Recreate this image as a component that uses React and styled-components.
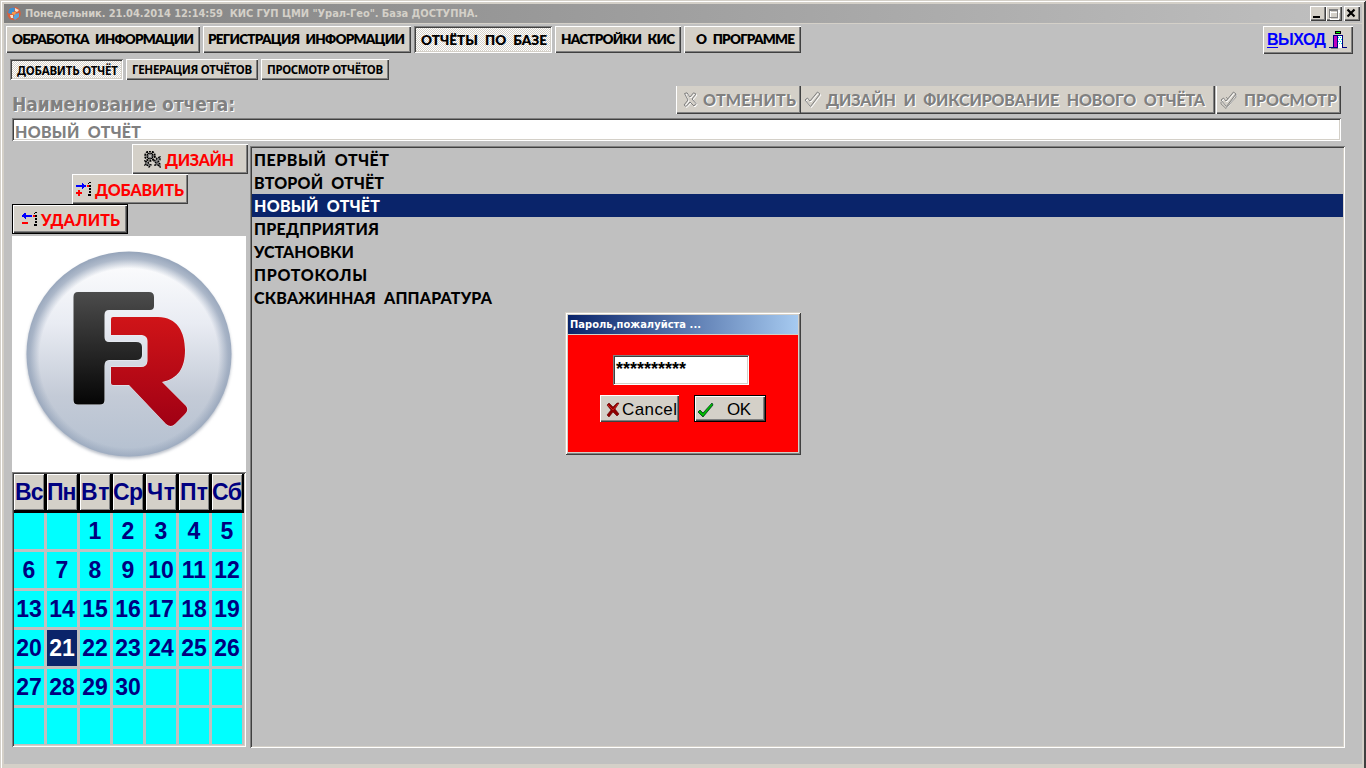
import React, { useLayoutEffect, useRef } from "react";
import styled, { createGlobalStyle, css } from "styled-components";

const COMIC = `Lato, "Noto Sans", sans-serif`;
const TAHOMA = `"DejaVu Sans Condensed", "DejaVu Sans", "Noto Sans", sans-serif`;
const ARIAL = `"Liberation Sans", Arial, sans-serif`;

const Global = createGlobalStyle`
  * { box-sizing: border-box; }
  html, body { margin: 0; padding: 0; overflow: hidden; background: #c0c0c0; }
  button { margin: 0; border: 0; padding: 0; border-radius: 0; color: inherit; }
`;

const raised = css`
  box-shadow: inset 1px 1px #fff, inset -1px -1px #404040, inset -2px -2px #808080;
`;
const sunken = css`
  box-shadow: inset 1px 1px #808080, inset -1px -1px #fff, inset 2px 2px #404040,
    inset -2px -2px #d4d0c8;
`;

const Window = styled.div`
  position: relative;
  width: 1366px;
  height: 768px;
  padding: 4px 4px 4px 4px;
  background: #c0c0c0;
  overflow: hidden;
  box-shadow: inset 1px 0 #d4d0c8, inset 0 1px #d4d0c8, inset -1px 0 #404040,
    inset 2px 2px #fff, inset -2px 0 #404040, inset 0 -4px #d4d0c8, inset 4px 4px #d4d0c8,
    inset -4px 0 #d4d0c8;
`;
const TitleBar = styled.header`
  display: flex;
  align-items: center;
  height: 20px;
  padding: 0 2px 1px 3px;
  gap: 4px;
  border-bottom: 1px solid #d4d0c8;
  background: linear-gradient(90deg, #808080, #c0c0c0);
  color: #d4d0c8;
  font: bold 11px ${TAHOMA};
`;
const Caption = styled.div`
  flex: 1;
  padding-top: 1px;
`;
const WinButtons = styled.div`
  display: flex;
  height: 15px;
`;
const WinButton = styled.button`
  width: 16px;
  height: 15px;
  margin-left: ${(p) => p.$gap || 0}px;
  background: #d4d0c8;
  ${raised}
  svg { display: block; }
`;
const TextSpan = styled.span`
  display: inline-block;
  white-space: pre;
`;

/* Spreads the letters so that a label fills the given width. */
function Fit({ w, children }) {
  const ref = useRef(null);
  useLayoutEffect(() => {
    const el = ref.current;
    el.style.letterSpacing = "0px";
    const natural = el.getBoundingClientRect().width;
    const n = el.textContent.length - 1;
    el.style.letterSpacing = `${(w - natural) / n}px`;
  }, [w, children]);
  return <TextSpan ref={ref}>{children}</TextSpan>;
}

const MainTabs = styled.nav`
  display: flex;
  gap: 3px;
  padding: 2px 9px 0 2px;
  height: 30px;
`;
const Tab = styled.button`
  width: ${(p) => p.$w}px;
  height: 27px;
  padding: ${(p) => (p.$down ? 2 : 0)}px 0 0 ${(p) => p.$pad}px;
  text-align: left;
  white-space: nowrap;
  background: #d4d0c8;
  color: #000;
  font: 800 13.5px/25px ${COMIC};
  word-spacing: 4px;
  ${raised}
  ${(p) =>
    p.$down &&
    css`
      background: repeating-conic-gradient(#fff 0 25%, #d4d0c8 0 50%) 0 0 / 2px 2px;
      ${sunken}
    `}
`;
const SubTabs = styled.nav`
  display: flex;
  gap: 3px;
  padding: 5px 0 0 6px;
`;
const SubTab = styled(Tab)`
  height: 21px;
  font: bold 11.5px/20px "Noto Sans", "Open Sans", sans-serif;
  word-spacing: 0;
`;
const ExitButton = styled.button`
  display: flex;
  align-items: center;
  gap: 4px;
  width: 90px;
  height: 28px;
  margin-left: auto;
  padding-left: 4px;
  background: #d4d0c8;
  color: #0000ff;
  font: bold 16px ${ARIAL};
  ${raised}
  u { text-underline-offset: 2px; text-decoration-thickness: 1px; }
`;
const ReportBar = styled.div`
  display: flex;
  height: 28px;
  margin: 6px 21px 0 8px;
`;
const ReportLabel = styled.label`
  flex: 1;
  padding: 6px 0 0 0;
  color: #808080;
  text-shadow: 1px 1px #fff;
  font: bold 19px/24px ${TAHOMA};
`;
const GhostButton = styled.button`
  display: flex;
  align-items: center;
  gap: ${(p) => p.$gap}px;
  width: ${(p) => p.$w}px;
  height: 28px;
  margin-left: ${(p) => p.$ml || 0}px;
  padding: 0 0 1px ${(p) => p.$pad}px;
  background: #d4d0c8;
  color: #808080;
  text-shadow: 1px 1px #fff;
  font: 900 16px ${COMIC};
  word-spacing: 4px;
  box-shadow: inset ${(p) => (p.$flat ? 0 : 1)}px 0 #fff, inset -1px -1px #404040,
    inset -2px -2px #808080;
  svg { flex: none; }
`;
const NameField = styled.div`
  height: 23px;
  margin: 4px 21px 0 8px;
  padding-left: 3px;
  background: #fff;
  color: #808080;
  font: 900 16px/27px ${COMIC};
  word-spacing: 4px;
  ${sunken}
`;
const Body = styled.main`
  display: flex;
  padding: 3px 0 0 8px;
`;
const Side = styled.aside`
  width: 238px;
`;
const ActionButton = styled.button`
  display: flex;
  align-items: center;
  width: 116px;
  height: 30px;
  margin-left: ${(p) => p.$ml}px;
  padding: 0 0 0 ${(p) => p.$pad}px;
  gap: ${(p) => p.$gap}px;
  background: #d4d0c8;
  color: #ff0000;
  font: 900 16px ${COMIC};
  ${raised}
  ${(p) =>
    p.$default &&
    css`
      box-shadow: inset 0 0 0 1px #000, inset 2px 2px #fff, inset -2px -2px #404040,
        inset -3px -3px #808080;
    `}
  svg { flex: none; }
`;
const Picture = styled.div`
  width: 234px;
  height: 236px;
  margin-top: 2px;
  background: #fff;
  svg { display: block; }
`;
const Calendar = styled.div`
  width: 234px;
  height: 275px;
  padding: 2px;
  background: #c0c0c0;
  color: #000080;
  font: bold 23px ${ARIAL};
  ${sunken}
`;
const WeekHead = styled.div`
  display: grid;
  grid-template-columns: repeat(7, 30px);
  gap: 3px;
  height: 39px;
  background: #000;
`;
const WeekDay = styled.div`
  height: 36px;
  padding-left: ${(p) => p.$pad}px;
  background: #d4d0c8;
  line-height: 36px;
  white-space: nowrap;
  box-shadow: inset 1px 1px #fff, inset -1px -1px #808080;
`;
const Days = styled.div`
  display: grid;
  grid-template-columns: repeat(7, 30px);
  grid-auto-rows: 36px;
  gap: 3px;
`;
const Day = styled.div`
  display: flex;
  align-items: center;
  justify-content: center;
  background: ${(p) => (p.$on ? "#0a246a" : "#00ffff")};
  color: ${(p) => (p.$on ? "#fff" : "#000080")};
`;
const List = styled.div`
  width: 1095px;
  height: 602px;
  margin-top: 2px;
  padding: 2px;
  background: #c0c0c0;
  font: 900 16px/24px ${COMIC};
  word-spacing: 4px;
  ${sunken}
`;
const ListItem = styled.div`
  height: 23px;
  padding-left: 2px;
  background: ${(p) => (p.$on ? "#0a246a" : "transparent")};
  color: ${(p) => (p.$on ? "#fff" : "#000")};
`;

const Dialog = styled.div`
  position: absolute;
  left: 565px;
  top: 312px;
  width: 236px;
  height: 143px;
  padding: 3px;
  background: #d4d0c8;
  box-shadow: inset 1px 1px #d4d0c8, inset -1px -1px #404040, inset 2px 2px #fff,
    inset -2px -2px #808080;
`;
const DialogTitle = styled.div`
  height: 19px;
  padding-left: 2px;
  background: linear-gradient(90deg, #0a246a, #a6caf0);
  color: #fff;
  font: bold 11px/20px ${TAHOMA};
`;
const DialogBody = styled.div`
  height: 117px;
  margin-top: 1px;
  padding: 20px 0 0 32px;
  background: #ff0000;
`;
const Password = styled.div`
  width: 136px;
  height: 30px;
  margin-left: 13px;
  padding-left: 3px;
  background: #fff;
  color: #000;
  font: bold 18px/28px ${ARIAL};
  ${sunken}
`;
const DialogButtons = styled.div`
  display: flex;
  gap: 15px;
  margin-top: 10px;
`;
const DialogButton = styled.button`
  display: flex;
  align-items: center;
  width: ${(p) => p.$w}px;
  height: 27px;
  padding: 2px 0 0 ${(p) => p.$pad}px;
  gap: ${(p) => p.$gap}px;
  background: #d4d0c8;
  color: #000;
  font: 17px ${ARIAL};
  ${raised}
  ${(p) =>
    p.$default &&
    css`
      box-shadow: inset 0 0 0 1px #000, inset 2px 2px #fff, inset -2px -2px #404040,
        inset -3px -3px #808080;
    `}
  svg { flex: none; }
`;

const GlobeIcon = () => (
  <svg width="14" height="15" viewBox="0 0 14 15">
    <circle cx="7" cy="7.5" r="6.8" fill="#d8603c" />
    <path d="M2 3 Q6 0 8 2 L7 6 4 8 1 7Z" fill="#3d8fd0" />
    <path d="M8 8 L12 7 12 11 8 14 6 12Z" fill="#5aa5dc" />
    <path d="M8 2 L12 4 10 6 8 5Z M3 9 L6 9 6 12 4 12Z" fill="#f4e4d0" />
    <path d="M5 6 L9 6 8 9 5 8Z" fill="#f59d50" />
  </svg>
);
const ExitIcon = () => (
  <svg width="18" height="19" viewBox="0 0 18 19" shapeRendering="crispEdges">
    <path d="M6 0h6v3H6z" fill="#000" />
    <path d="M7 1h4v1H7z" fill="#00ff00" />
    <path d="M4 4h10v1H4z" fill="#000080" />
    <path d="M5 5h3v11H5z" fill="#c000c0" />
    <path d="M4 4h1v12H4zM8 4h1v14H8zM13 4h1v13h-1z" fill="#000080" />
    <path d="M9 5h4v12H9z" fill="#fff" />
    <path d="M9 6h1v1H9zM11 6h1v1h-1zM10 8h1v1h-1zM12 8h1v1h-1zM9 10h1v1H9zM11 10h1v1h-1zM10 12h1v1h-1zM12 12h1v1h-1z" fill="#00d8e8" />
    <path d="M0 16h8v1H0zM13 16h5v1h-5z" fill="#000080" />
    <path d="M2 17h7v1H2z" fill="#808080" />
  </svg>
);
const CHECK = "M1 9 L3.5 7 L6 10 L13.5 1 L16 3 L6.5 15.5 Z";
const GhostCross = () => (
  <svg width="15" height="16" viewBox="0 0 15 16" fill="none" strokeWidth="1">
    {["#fff", "#808080"].map((c, i) => (
      <path
        key={c}
        transform={i ? undefined : "translate(1 1)"}
        stroke={c}
        d="M1.5 1.5 L4 .8 L7 5 L10.5 .8 L13 2 L9 7 L13 11.5 L11 14 L7 10 L3 14.5 L1 13 L5 8 Z"
      />
    ))}
  </svg>
);
const GhostCheck = ({ twice }) => (
  <svg width="18" height="18" viewBox="0 0 18 18" fill="none" strokeWidth="1">
    <path transform="translate(1 1)" stroke="#fff" d={CHECK} />
    <path stroke="#808080" d={CHECK} />
    {twice && <path stroke="#808080" strokeWidth=".8" d="M1 11 L1 13 L6 17.500 L16 6 V3 M6 6 L8 8" />}
  </svg>
);
const GearsIcon = () => (
  <svg width="17" height="17" viewBox="0 0 17 17">
    <circle cx="6" cy="5" r="4.8" fill="none" stroke="#000" strokeWidth="2" strokeDasharray="2 1" />
    <circle cx="6" cy="5" r="3" fill="#808080" stroke="#000" />
    <circle cx="6" cy="5" r="1" fill="#d4d0c8" />
    <path d="M1 10l3 1 1 2 2 1-2 2-2-2-2 0 1-2zM16 6l-3 1-1 2-2 1 2 2-1 2 3 0 2 2v-3l-2-2 2-2z" fill="#808080" stroke="#000" strokeWidth="1.3" strokeDasharray="2 1" />
  </svg>
);
const Dots = () => (
  <path d="M13 0h2v1h-2zM12 1h1v1h-1zM13 3h2v2h-2zM13 6h2v2h-2zM13 9h2v2h-2zM12 12h3v2h-3z" fill="#000" />
);
const AddIcon = () => (
  <svg width="17" height="15" viewBox="0 0 17 15" shapeRendering="crispEdges">
    <path d="M0 3h6V1h1v1h1v1h2v2H8v1H7v1H6V5H0z" fill="#0000ff" />
    <path d="M11 3h2v2h-2zM2 8h2v2h2v2H4v2H2v-2H0v-2h2z" fill="#ff0000" />
    <Dots />
  </svg>
);
const RemoveIcon = () => (
  <svg width="17" height="15" viewBox="0 0 17 15" shapeRendering="crispEdges">
    <path d="M0 3h1V2h1V1h2v2h6v2H4v2H3V6H2V5H0z" fill="#0000ff" />
    <path d="M11 3h2v2h-2zM0 10h6v2H0z" fill="#ff0000" />
    <Dots />
  </svg>
);
const CancelIcon = () => (
  <svg width="14" height="16" viewBox="0 0 14 16">
    <path d="M1 3 L3 1 L7 5 L11 1 H13 L9 7 L13 12 L11 14 L7 10 L3 15 L1 13 L5 8Z" fill="#900000" stroke="#600000" strokeWidth=".6" />
    <path d="M2 3 L7 8 L12 2" fill="none" stroke="#d02020" strokeWidth="1" />
  </svg>
);
const OkIcon = () => (
  <svg width="17" height="16" viewBox="0 0 17 16">
    <path d="M1 10 L3 8 L6 11 L15 1 L16 3 L6 15Z" fill="#00a000" stroke="#003c20" strokeWidth=".8" />
    <path d="M2 9.5 L6 13 L15 2" fill="none" stroke="#00d000" strokeWidth=".9" />
  </svg>
);

const Logo = () => (
  <svg width="234" height="236" viewBox="12 236 234 236">
    <defs>
      <linearGradient id="disc" x1="0" y1="0" x2="0" y2="1">
        <stop offset="0" stopColor="#ffffff" />
        <stop offset=".35" stopColor="#e9ecf3" />
        <stop offset=".7" stopColor="#c4cbd7" />
        <stop offset="1" stopColor="#b4c0d0" />
      </linearGradient>
      <radialGradient id="rim" cx=".5" cy=".52" r=".52">
        <stop offset=".84" stopColor="#94a3b9" stopOpacity="0" />
        <stop offset=".93" stopColor="#94a3b9" stopOpacity=".75" />
        <stop offset="1" stopColor="#94a3b9" />
      </radialGradient>
      <linearGradient id="ef" x1="0" y1="0" x2="0" y2="1">
        <stop offset="0" stopColor="#4c4c4c" />
        <stop offset="1" stopColor="#050505" />
      </linearGradient>
      <linearGradient id="er" x1="0" y1="0" x2="0" y2="1">
        <stop offset="0" stopColor="#d01418" />
        <stop offset="1" stopColor="#a00014" />
      </linearGradient>
      <filter id="soft" x="-10%" y="-10%" width="120%" height="120%">
        <feGaussianBlur stdDeviation="1.5" />
      </filter>
    </defs>
    <circle cx="129" cy="356" r="102.5" fill="#b8bec8" filter="url(#soft)" />
    <circle cx="129" cy="354" r="102.5" fill="url(#disc)" />
    <circle cx="129" cy="354" r="102.5" fill="url(#rim)" />
    <path
      d="M78 292H149Q154 292 154 297V306Q154 310 150 310H109Q104.500 310 104.500 315V337Q104.500 342 109 342H136Q142 342 142 347V355Q142 360 136 360H109Q104.500 360 104.500 366V400Q104.500 404.500 100 404.500H78Q73.500 404.500 73.500 400V297Q73.500 292 78 292Z"
      fill="url(#ef)"
      stroke="#edf0f5"
      strokeWidth="1"
      paintOrder="stroke"
    />
    <path
      d="M113 317H158C177 317 185 332 185 350C185 368 178 379 162 382L186 406Q189 410 185 414L175 424Q171 428 166 424L129 385H113Q111 385 111 383V367H141Q147 367 147.500 361V341Q147.500 336 142 335H111V319Q111 317 113 317Z"
      fill="url(#er)"
      stroke="#edf0f5"
      strokeWidth="1"
      paintOrder="stroke"
    />
  </svg>
);

const REPORTS = [
  ["ПЕРВЫЙ ОТЧЁТ", 135],
  ["ВТОРОЙ ОТЧЁТ", 130],
  ["НОВЫЙ ОТЧЁТ", 126],
  ["ПРЕДПРИЯТИЯ", 125],
  ["УСТАНОВКИ", 100],
  ["ПРОТОКОЛЫ", 113],
  ["СКВАЖИННАЯ АППАРАТУРА", 238],
];
/* name, left padding, text width */
const WEEK = [
  ["Вс", 1, 28.5],
  ["Пн", 0, 29.5],
  ["Вт", 1, 28.5],
  ["Ср", 0, 30],
  ["Чт", 1, 28],
  ["Пт", 1, 28],
  ["Сб", 0, 30],
];
const CELLS = Array.from({ length: 42 }, (_, i) => (i >= 2 && i < 32 ? i - 1 : null));

export default function App() {
  return (
    <Window>
      <Global />
      <TitleBar>
        <GlobeIcon />
        <Caption>
          <Fit w={453}>{'Понедельник. 21.04.2014 12:14:59  КИС ГУП ЦМИ "Урал-Гео". База ДОСТУПНА.'}</Fit>
        </Caption>
        <WinButtons>
          <WinButton>
            <svg width="16" height="15"><path d="M3 10h7v2H3z" fill="#000" /></svg>
          </WinButton>
          <WinButton>
            <svg width="16" height="15" fill="none" shapeRendering="crispEdges">
              <path d="M3.500 4v8h8V3M3 3h9v2H3z" stroke="#fff" transform="translate(1 1)" />
              <path d="M3.500 4v7.500h8V3M3 3.500h9M3 4.500h9" stroke="#808080" />
            </svg>
          </WinButton>
          <WinButton $gap={2}>
            <svg width="16" height="15"><path d="M3.500 3.500l7 7M10.500 3.500l-7 7" stroke="#000" strokeWidth="2.200" /></svg>
          </WinButton>
        </WinButtons>
      </TitleBar>

      <MainTabs>
        <Tab $w={194} $pad={6}><Fit w={182}>ОБРАБОТКА ИНФОРМАЦИИ</Fit></Tab>
        <Tab $w={208} $pad={5}><Fit w={197}>РЕГИСТРАЦИЯ ИНФОРМАЦИИ</Fit></Tab>
        <Tab $w={138} $pad={7} $down><Fit w={126}>ОТЧЁТЫ ПО БАЗЕ</Fit></Tab>
        <Tab $w={126} $pad={6}><Fit w={114}>НАСТРОЙКИ КИС</Fit></Tab>
        <Tab $w={117} $pad={12}><Fit w={99}>О ПРОГРАММЕ</Fit></Tab>
        <ExitButton>
          <Fit w={59}><u>В</u>ЫХОД</Fit>
          <ExitIcon />
        </ExitButton>
      </MainTabs>

      <SubTabs>
        <SubTab $w={113} $pad={7} $down><Fit w={101}>ДОБАВИТЬ ОТЧЁТ</Fit></SubTab>
        <SubTab $w={132} $pad={6}><Fit w={120}>ГЕНЕРАЦИЯ ОТЧЁТОВ</Fit></SubTab>
        <SubTab $w={128} $pad={6}><Fit w={116}>ПРОСМОТР ОТЧЁТОВ</Fit></SubTab>
      </SubTabs>

      <ReportBar>
        <ReportLabel><Fit w={223}>Наименование отчета:</Fit></ReportLabel>
        <GhostButton $w={125} $pad={7} $gap={5}><GhostCross /><Fit w={93}>ОТМЕНИТЬ</Fit></GhostButton>
        <GhostButton $w={414} $pad={3} $gap={4} $flat><GhostCheck /><Fit w={379}>ДИЗАЙН И ФИКСИРОВАНИЕ НОВОГО ОТЧЁТА</Fit></GhostButton>
        <GhostButton $w={125} $ml={1} $pad={4} $gap={6}><GhostCheck twice /><Fit w={93}>ПРОСМОТР</Fit></GhostButton>
      </ReportBar>
      <NameField><Fit w={126}>НОВЫЙ ОТЧЁТ</Fit></NameField>

      <Body>
        <Side>
          <ActionButton $ml={120} $pad={12} $gap={4}><GearsIcon /><Fit w={69}>ДИЗАЙН</Fit></ActionButton>
          <ActionButton $ml={60} $pad={4} $gap={2}><AddIcon /><Fit w={89}>ДОБАВИТЬ</Fit></ActionButton>
          <ActionButton $ml={0} $pad={10} $gap={2} $default><RemoveIcon /><Fit w={79}>УДАЛИТЬ</Fit></ActionButton>
          <Picture><Logo /></Picture>
          <Calendar>
            <WeekHead>
              {WEEK.map(([d, pad, w]) => (
                <WeekDay key={d} $pad={pad}><Fit w={w}>{d}</Fit></WeekDay>
              ))}
            </WeekHead>
            <Days>{CELLS.map((d, i) => <Day key={i} $on={d === 21}>{d}</Day>)}</Days>
          </Calendar>
        </Side>
        <List>
          {REPORTS.map(([name, w], i) => (
            <ListItem key={name} $on={i === 2}><Fit w={w}>{name}</Fit></ListItem>
          ))}
        </List>
      </Body>

      <Dialog>
        <DialogTitle><Fit w={131}>Пароль,пожалуйста ...</Fit></DialogTitle>
        <DialogBody>
          <Password>**********</Password>
          <DialogButtons>
            <DialogButton $w={79} $pad={6} $gap={2}><CancelIcon /><Fit w={55}>Cancel</Fit></DialogButton>
            <DialogButton $w={72} $pad={3} $gap={13} $default><OkIcon /><Fit w={24}>OK</Fit></DialogButton>
          </DialogButtons>
        </DialogBody>
      </Dialog>
    </Window>
  );
}
